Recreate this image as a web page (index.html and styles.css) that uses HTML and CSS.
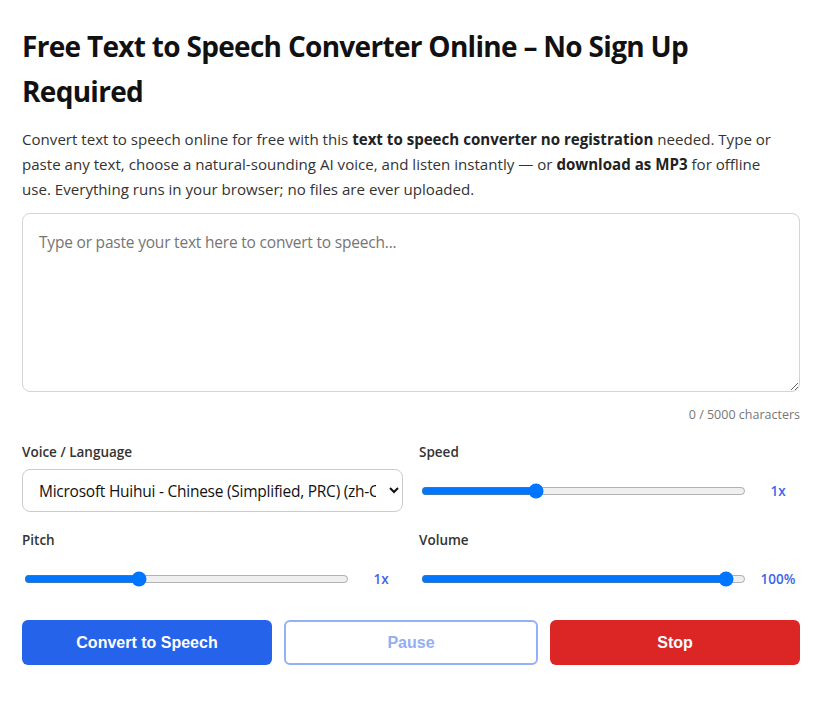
FILE: index.html
```html
<!DOCTYPE html>
<html lang="en">
<head>
<meta charset="utf-8">
<title>Free Text to Speech Converter Online</title>
<link rel="stylesheet" href="styles.css">
</head>
<body>
<main class="tool">
  <h1 class="title">Free Text to Speech Converter Online – No Sign Up Required</h1>
  <p class="intro">Convert text to speech online for free with this <strong>text to speech converter no registration</strong> needed. Type or paste any text, choose a natural-sounding AI voice, and listen instantly — or <strong>download as MP3</strong> for offline use. Everything runs in your browser; no files are ever uploaded.</p>
  <textarea class="input" placeholder="Type or paste your text here to convert to speech..."></textarea>
  <div class="counter">0 / 5000 characters</div>
  <div class="controls">
    <div class="field">
      <label class="label">Voice / Language</label>
      <select class="select">
        <option>Microsoft Huihui - Chinese (Simplified, PRC) (zh-CN)</option>
      </select>
    </div>
    <div class="field">
      <label class="label">Speed</label>
      <div class="range-row">
        <input class="range" type="range" min="0.5" max="2" step="0.01" value="1.02">
        <span class="value">1x</span>
      </div>
    </div>
    <div class="field">
      <label class="label">Pitch</label>
      <div class="range-row">
        <input class="range" type="range" min="0.5" max="2" step="0.01" value="1.02">
        <span class="value">1x</span>
      </div>
    </div>
    <div class="field">
      <label class="label">Volume</label>
      <div class="range-row">
        <input class="range" type="range" min="0" max="100" step="1" value="96">
        <span class="value">100%</span>
      </div>
    </div>
  </div>
  <div class="actions">
    <button class="btn btn-primary">Convert to Speech</button>
    <button class="btn btn-outline" disabled>Pause</button>
    <button class="btn btn-danger">Stop</button>
  </div>
</main>
</body>
</html>
```

FILE: styles.css
```css
html, body {
  margin: 0;
  padding: 0;
  background: #ffffff;
}

body {
  font-family: "Open Sans", "Noto Sans", Arial, sans-serif;
  color: #333333;
}

.tool {
  width: 778px;
  padding: 24px 18px 40px 22px;
}

.title {
  margin: 0;
  font-size: 28px;
  line-height: 45px;
  font-weight: 700;
  letter-spacing: -0.7px;
  color: #111111;
}

.intro {
  max-width: 765px;
  margin: 13px 0 11px;
  font-size: 15.1px;
  line-height: 25px;
  color: #333333;
}

.intro strong {
  color: #222222;
}

.input {
  display: block;
  box-sizing: border-box;
  width: 100%;
  height: 179px;
  padding: 16px;
  border: 1px solid #d4d4d8;
  border-radius: 8px;
  font-family: inherit;
  font-size: 15.5px;
  line-height: 24px;
  letter-spacing: -0.2px;
  color: #333;
  resize: vertical;
}

.input::placeholder {
  color: #757575;
}

.counter {
  margin-top: 13px;
  text-align: right;
  font-size: 12.5px;
  line-height: 20px;
  color: #777777;
}

.controls {
  margin-top: 17px;
  display: grid;
  grid-template-columns: 1fr 1fr;
  column-gap: 16px;
  row-gap: 18px;
}

.field {
  display: flex;
  flex-direction: column;
}

.label {
  font-size: 13.5px;
  line-height: 20px;
  font-weight: 600;
  color: #333333;
  margin-bottom: 7px;
}

.select {
  box-sizing: border-box;
  width: 100%;
  height: 43px;
  padding: 0 10px 0 12px;
  border: 1px solid #cccccc;
  border-radius: 8px;
  background: #ffffff;
  font-family: inherit;
  font-size: 15.5px;
  letter-spacing: -0.25px;
  color: #111111;
}

.range-row {
  height: 43px;
  display: flex;
  align-items: center;
  gap: 8px;
}

.range {
  flex: 1;
  margin: 2px;
}

.value {
  width: 44px;
  text-align: center;
  font-size: 13.5px;
  font-weight: 600;
  color: #4264ea;
}

.actions {
  margin-top: 20px;
  display: flex;
  gap: 12px;
}

.btn {
  flex: 1;
  height: 45px;
  border-radius: 6px;
  font-family: "Liberation Sans", Arial, sans-serif;
  font-size: 16px;
  font-weight: 700;
  cursor: pointer;
}

.btn-primary {
  background: #2563eb;
  border: none;
  color: #ffffff;
}

.btn-outline {
  background: #ffffff;
  border: 2px solid #93b1f5;
  color: #93aef3;
}

.btn-danger {
  background: #dc2626;
  border: none;
  color: #ffffff;
}
```
